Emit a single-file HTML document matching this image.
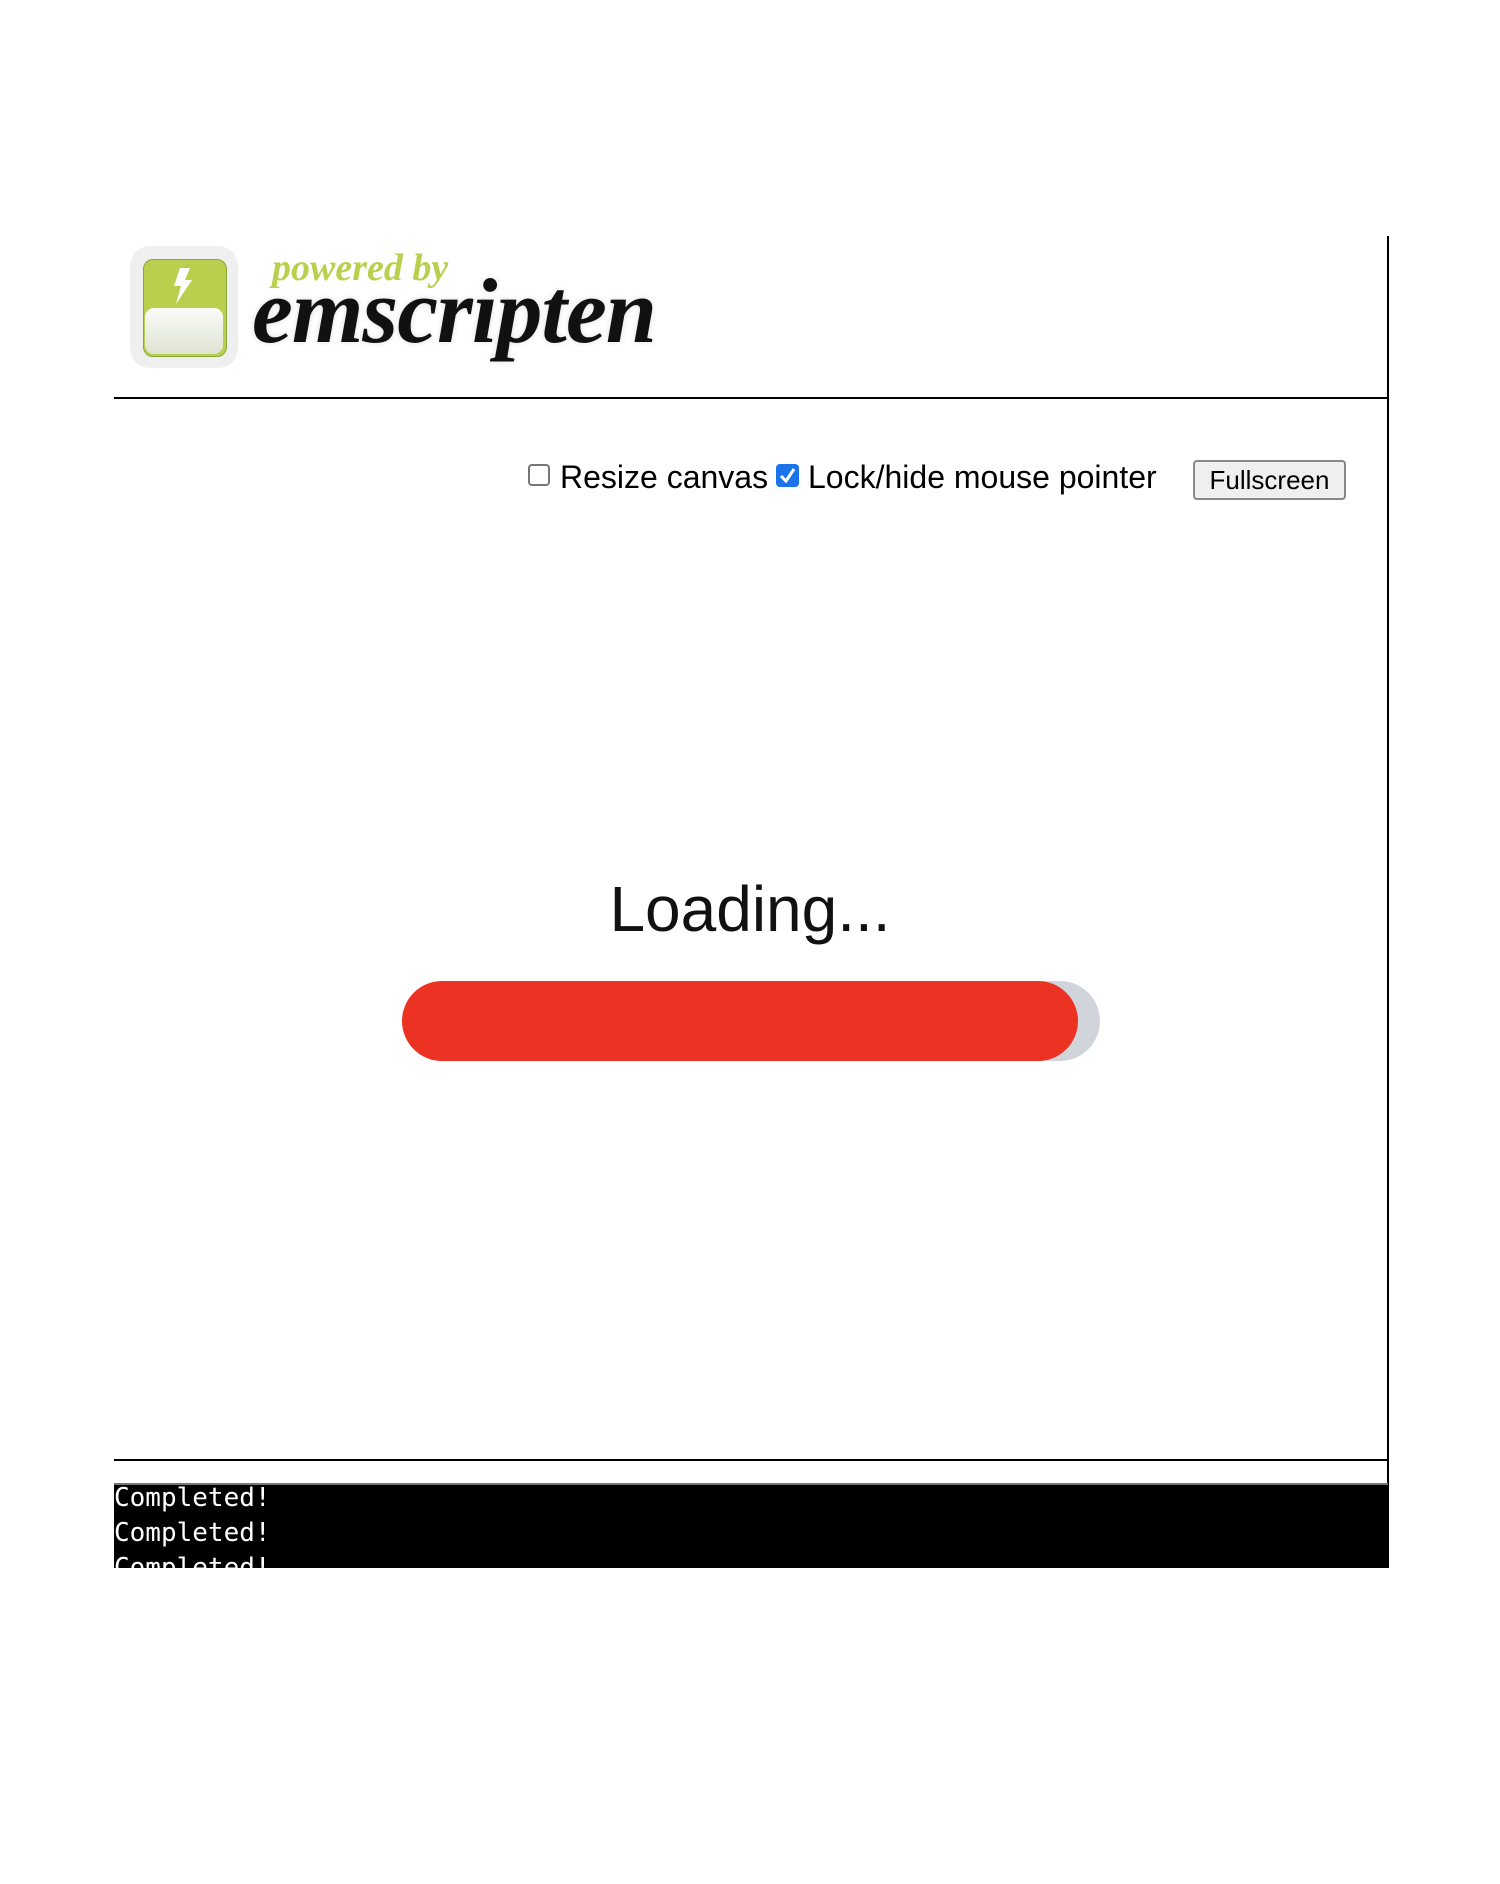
<!DOCTYPE html>
<html><head><meta charset="utf-8"><style>
html,body{margin:0;padding:0;background:#fff;width:1500px;height:1884px;overflow:hidden;font-family:"Liberation Sans",Arial,sans-serif}
.abs{position:absolute}
</style></head><body>
<div class="abs" style="left:1387px;top:236px;width:2px;height:1332px;background:#000"></div>
<div class="abs" style="left:114px;top:397px;width:1274px;height:2px;background:#000"></div>
<div class="abs" style="left:114px;top:1459px;width:1274px;height:2px;background:#000"></div>
<!-- logo -->
<div class="abs" style="left:130px;top:246px;width:108px;height:122px;border-radius:20px;background:#efefef"></div>
<div class="abs" style="left:143px;top:259px;width:82px;height:96px;border-radius:10px;background:#b9d04e;border:1px solid #8fa53a"></div>
<div class="abs" style="left:145px;top:308px;width:78px;height:46px;border-radius:9px;background:linear-gradient(#fbfbf8,#dfe4d4)"></div>
<svg class="abs" style="left:170px;top:268px" width="28" height="36" viewBox="0 0 28 36"><path d="M10 0 L20 0 L15 12 L22 12 L6 36 L11 18 L4 18 Z" fill="#fff"/></svg>
<div class="abs" style="left:272px;top:246px;font-family:'Liberation Serif',serif;font-style:italic;font-weight:bold;font-size:38px;color:#b9d04e">powered by</div>
<div class="abs" style="left:252px;top:258px;font-family:'Liberation Serif',serif;font-style:italic;font-weight:bold;font-size:92px;letter-spacing:-1px;color:#111;text-shadow:0 0 6px #ddd">emscripten</div>
<!-- controls -->
<div class="abs" style="left:528px;top:464px;width:22px;height:22px;border:2px solid #777;border-radius:4px;box-sizing:border-box"></div>
<div class="abs" style="left:560px;top:459px;font-size:32px;color:#000">Resize canvas</div>
<div class="abs" style="left:776px;top:464px;width:23px;height:23px;background:#1a73e8;border-radius:4px"></div>
<svg class="abs" style="left:776px;top:464px" width="23" height="23"><path d="M5 12 L10 17 L18 5" stroke="#fff" stroke-width="3" fill="none"/></svg>
<div class="abs" style="left:808px;top:459px;font-size:32px;color:#000">Lock/hide mouse pointer</div>
<div class="abs" style="left:1193px;top:460px;width:153px;height:40px;box-sizing:border-box;border:2px solid #888;border-radius:4px;background:#efefef;font-size:26px;text-align:center;line-height:36px">Fullscreen</div>
<!-- loading -->
<div class="abs" style="left:0;width:1500px;top:872px;text-align:center;font-size:64px;color:#111;letter-spacing:0px">Loading...</div>
<div class="abs" style="left:420px;top:981px;width:680px;height:80px;border-radius:40px;background:#d2d4db"></div>
<div class="abs" style="left:402px;top:981px;width:676px;height:80px;border-radius:40px;background:#eb3223"></div>
<!-- console -->
<div class="abs" style="left:114px;top:1483px;width:1274px;height:85px;background:#000;border-top:2px solid #777;box-sizing:border-box;overflow:hidden;font-family:'DejaVu Sans Mono','Liberation Mono',monospace;font-size:26px;line-height:35px;color:#fff;white-space:pre;margin-top:0"><div style="margin-top:-4px">Completed!
Completed!
Completed!</div></div>
</body></html>
